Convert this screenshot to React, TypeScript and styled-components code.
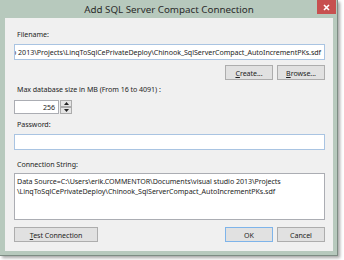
import React from 'react'
import styled, { createGlobalStyle } from 'styled-components'

const Global = createGlobalStyle`
  html, body {
    margin: 0;
    padding: 0;
    background: #ffffff;
  }
  body {
    width: 344px;
    height: 260px;
    overflow: hidden;
    font-family: "Noto Sans", "Open Sans", sans-serif;
  }
`

const Page = styled.div`
  width: 344px;
  height: 260px;
  background: #ffffff;
`

const Window = styled.div`
  width: 338px;
  height: 256px;
  box-sizing: border-box;
  background: #b7c9bd;
  border-right: 1px solid #7d8c83;
  border-bottom: 1px solid #7d8c83;
  box-shadow: 2px 2px 3px rgba(0, 0, 0, 0.35);
  display: flex;
  flex-direction: column;
  padding: 0 4px 4px 5px;
`

const TitleBar = styled.div`
  height: 21px;
  display: flex;
  align-items: center;
  justify-content: center;
  position: relative;
`

const Title = styled.div`
  font-size: 9.8px;
  color: #2b2b2b;
  padding-top: 1px;
`

const Close = styled.div`
  position: absolute;
  right: -3px;
  top: 0;
  width: 19px;
  height: 14px;
  background: #c75050;
  display: flex;
  align-items: center;
  justify-content: center;
`

const Client = styled.div`
  flex: 1;
  background: #f0f0f0;
  display: flex;
  flex-direction: column;
  padding: 10px 8px 9px 9px;
  font-size: 7.1px;
  letter-spacing: -0.05px;
  color: #1e1e1e;
`

const Label = styled.div<{ $mt?: number }>`
  height: 12px;
  line-height: 12px;
  padding-left: 3px;
  margin-top: ${p => p.$mt ?? 0}px;
  white-space: nowrap;
`

const TextBox = styled.div<{ $mt?: number }>`
  height: 16px;
  box-sizing: border-box;
  margin-top: ${p => p.$mt ?? 0}px;
  background: #ffffff;
  border: 1px solid #a9c4e2;
  display: flex;
  align-items: center;
  justify-content: flex-end;
  overflow: hidden;
  white-space: nowrap;
  padding-right: 3px;
`

const Row = styled.div<{ $mt?: number }>`
  display: flex;
  margin-top: ${p => p.$mt ?? 0}px;
  justify-content: flex-end;
  gap: 4px;
`

const Button = styled.div<{ $w: number; $default?: boolean }>`
  width: ${p => p.$w}px;
  height: 15px;
  box-sizing: border-box;
  background: #e1e1e1;
  border: 1px solid ${p => (p.$default ? '#7eb4ea' : '#adadad')};
  display: flex;
  align-items: center;
  justify-content: center;
  white-space: nowrap;
`

const Spin = styled.div`
  display: flex;
  height: 14px;
  margin-top: 5px;
`

const SpinInput = styled.div`
  width: 45px;
  box-sizing: border-box;
  background: #ffffff;
  border: 1px solid #abadb3;
  display: flex;
  align-items: center;
  justify-content: flex-end;
  padding-right: 3px;
`

const SpinArrows = styled.div`
  width: 12px;
  margin-left: 1px;
  display: flex;
  flex-direction: column;
`

const Arrow = styled.div`
  flex: 1;
  background: #e5e5e5;
  border: 1px solid #acacac;
  display: flex;
  align-items: center;
  justify-content: center;
`

const TextArea = styled.div`
  height: 47px;
  box-sizing: border-box;
  margin-top: 3px;
  background: #ffffff;
  border: 1px solid #abadb3;
  padding: 3px 2px;
  line-height: 9.6px;
  white-space: nowrap;
`

const Spacer = styled.div`
  flex: 1;
`

const U = styled.span`
  text-decoration: underline;
`

export default function App() {
  return (
    <Page>
      <Global />
      <Window>
        <TitleBar>
          <Title>Add SQL Server Compact Connection</Title>
          <Close>
            <svg width="7" height="7" viewBox="0 0 7 7">
              <path d="M1 1L6 6M6 1L1 6" stroke="#fff" strokeWidth="1.6" />
            </svg>
          </Close>
        </TitleBar>
        <Client>
          <Label>Filename:</Label>
          <TextBox $mt={4}>
            C:\Users\erik.COMMENTOR\Documents\visual studio 2013\Projects\LinqToSqlCePrivateDeploy\Chinook_SqlServerCompact_AutoIncrementPKs.sdf
          </TextBox>
          <Row $mt={5}>
            <Button $w={48}><span><U>C</U>reate...</span></Button>
            <Button $w={48}><span><U>B</U>rowse...</span></Button>
          </Row>
          <Label $mt={3}>Max database size in MB (From 16 to 4091) :</Label>
          <Spin>
            <SpinInput>256</SpinInput>
            <SpinArrows>
              <Arrow>
                <svg width="5" height="3" viewBox="0 0 5 3"><path d="M0 3L2.5 0L5 3Z" fill="#222" /></svg>
              </Arrow>
              <Arrow>
                <svg width="5" height="3" viewBox="0 0 5 3"><path d="M0 0L2.5 3L5 0Z" fill="#222" /></svg>
              </Arrow>
            </SpinArrows>
          </Spin>
          <Label $mt={4}>Password:</Label>
          <TextBox $mt={4} />
          <Label $mt={8}>Connection String:</Label>
          <TextArea>
            Data Source=C:\Users\erik.COMMENTOR\Documents\visual studio 2013\Projects
            <br />
            \LinqToSqlCePrivateDeploy\Chinook_SqlServerCompact_AutoIncrementPKs.sdf
          </TextArea>
          <Row $mt={7}>
            <Button $w={84}><span><U>T</U>est Connection</span></Button>
            <Spacer />
            <Button $w={48} $default>OK</Button>
            <Button $w={48}>Cancel</Button>
          </Row>
        </Client>
      </Window>
    </Page>
  )
}
